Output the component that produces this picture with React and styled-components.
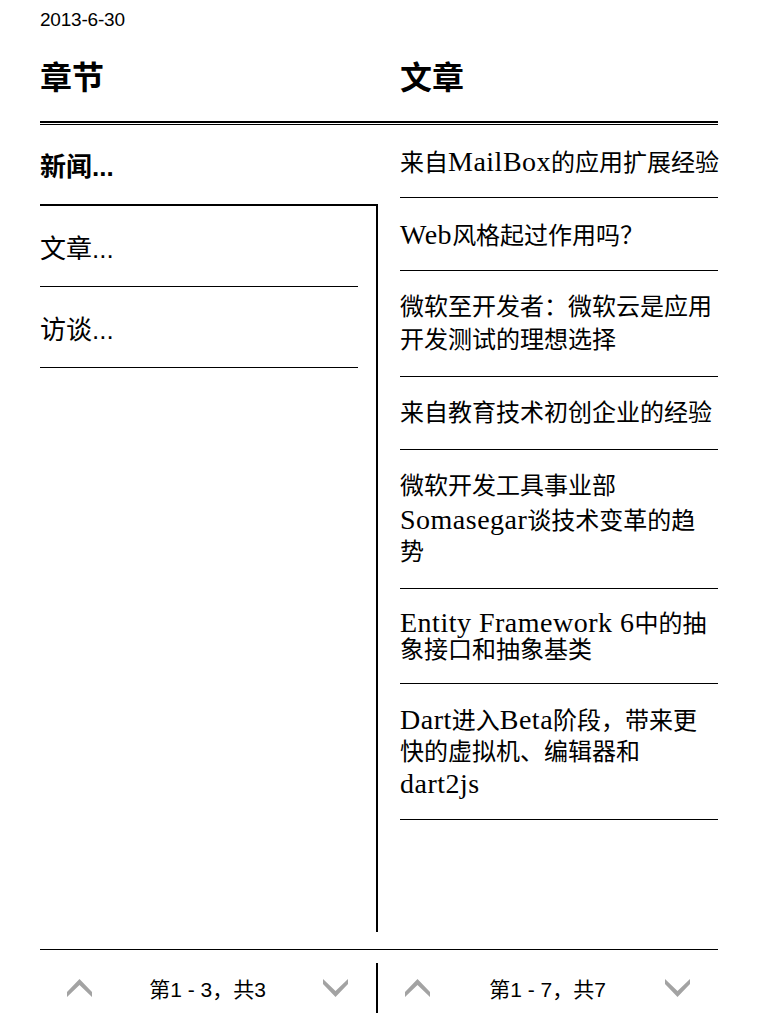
import React from 'react'
import styled, { createGlobalStyle } from 'styled-components'

const GlobalStyle = createGlobalStyle`
  html, body {
    margin: 0;
    background: #fff;
    color: #000;
    font-family: "Liberation Sans", "Noto Sans CJK SC", sans-serif;
  }
`

// Data
const sections = [
  { id: 'news', name: '新闻...' },
  { id: 'articles', name: '文章...' },
  { id: 'interviews', name: '访谈...' },
]

const articles = [
  { id: 1, lh: 33, lines: ['来自MailBox的应用扩展经验'] },
  { id: 2, lh: 33, lines: ['Web风格起过作用吗？'] },
  { id: 3, lh: 33, lines: ['微软至开发者：微软云是应用', '开发测试的理想选择'] },
  { id: 4, lh: 33, lines: ['来自教育技术初创企业的经验'] },
  { id: 5, lh: 33, lines: ['微软开发工具事业部', 'Somasegar谈技术变革的趋', '势'] },
  { id: 6, lh: 27.5, lines: ['Entity Framework 6中的抽', '象接口和抽象基类'] },
  { id: 7, lh: 32, lines: ['Dart进入Beta阶段，带来更', '快的虚拟机、编辑器和', 'dart2js'] },
]

// Styled-Component
const Page = styled.div`
  width: 758px;
  height: 1024px;
  padding: 0 40px;
  box-sizing: border-box;
  display: flex;
  flex-direction: column;
  overflow: hidden;
`

const DateLine = styled.div`
  height: 40px;
  line-height: 40px;
  font-size: 19px;
  letter-spacing: -0.2px;
`

const HeaderRow = styled.div`
  display: grid;
  grid-template-columns: 338px minmax(0, 1fr);
  height: 81px;
  border-bottom: 2px solid #000;
`

const HeaderCell = styled.div`
  padding-top: 20px;
  padding-left: ${(p) => (p.$right ? '22px' : '0')};
  line-height: 36px;
  font-size: 32px;
  font-weight: bold;
`

const ThinRule = styled.div`
  height: 1px;
  margin-top: 1px;
  background: #000;
`

const Body = styled.div`
  display: grid;
  grid-template-columns: 338px minmax(0, 1fr);
  height: 807px;
`

const LeftColumn = styled.div`
  display: flex;
  flex-direction: column;
`

const SelectedSection = styled.div`
  height: 79px;
  display: flex;
  align-items: center;
  font-size: 26px;
  font-weight: bold;
`

const SectionBox = styled.div`
  flex: 1;
  border-top: 2px solid #000;
  border-right: 2px solid #000;
`

const SectionItem = styled.div`
  height: 80px;
  margin-right: 18px;
  border-bottom: 1px solid #000;
  display: flex;
  align-items: center;
  font-size: 26px;
`

const RightColumn = styled.div`
  min-width: 0;
  padding-left: 22px;
`

const Article = styled.div`
  padding: 20px 0 19px;
  border-bottom: 1px solid #000;
  font-family: "Liberation Serif", "Noto Sans CJK SC", serif;
  font-size: 24px;
`

const Line = styled.div`
  height: ${(p) => p.$lh}px;
  line-height: ${(p) => p.$lh}px;
  white-space: nowrap;
`

const Latin = styled.span`
  font-size: 28px;
  letter-spacing: 0.5px;
`

const Footer = styled.div`
  margin-top: 17px;
  border-top: 1px solid #000;
  padding-top: 13px;
  display: grid;
  grid-template-columns: 336px 2px minmax(0, 1fr);
`

const Divider = styled.div`
  height: 50px;
  background: #000;
`

const Pager = styled.div`
  display: flex;
  align-items: center;
  justify-content: space-between;
  padding: 0 28px 0 27px;
`

const PagerText = styled.span`
  font-size: 21px;
`

const Chevron = ({ down }) => (
  <svg width="25" height="18" viewBox="0 0 25 18">
    <polygon
      fill="#a3a3a3"
      points={
        down
          ? '0,0 0,5 12.5,18 25,5 25,0 12.5,12'
          : '0,18 0,13 12.5,0 25,13 25,18 12.5,6'
      }
    />
  </svg>
)

// Latin runs are set a little larger, like the book face in the picture
const renderRuns = (text) =>
  text.split(/([A-Za-z0-9 ]+)/).filter(Boolean).map((run, i) =>
    /[A-Za-z0-9]/.test(run) ? <Latin key={i}>{run}</Latin> : <span key={i}>{run}</span>
  )

export default function App() {
  const [selected, ...rest] = sections

  return (
    <>
      <GlobalStyle />
      <Page>
        <DateLine>2013-6-30</DateLine>
        <HeaderRow>
          <HeaderCell>章节</HeaderCell>
          <HeaderCell $right>文章</HeaderCell>
        </HeaderRow>
        <ThinRule />
        <Body>
          <LeftColumn>
            <SelectedSection>{selected.name}</SelectedSection>
            <SectionBox>
              {rest.map((s) => (
                <SectionItem key={s.id}>{s.name}</SectionItem>
              ))}
            </SectionBox>
          </LeftColumn>
          <RightColumn>
            {articles.map((a) => (
              <Article key={a.id}>
                {a.lines.map((line, i) => (
                  <Line key={i} $lh={a.lh}>{renderRuns(line)}</Line>
                ))}
              </Article>
            ))}
          </RightColumn>
        </Body>
        <Footer>
          <Pager>
            <Chevron />
            <PagerText>第1 - 3，共3</PagerText>
            <Chevron down />
          </Pager>
          <Divider />
          <Pager>
            <Chevron />
            <PagerText>第1 - 7，共7</PagerText>
            <Chevron down />
          </Pager>
        </Footer>
      </Page>
    </>
  )
}
